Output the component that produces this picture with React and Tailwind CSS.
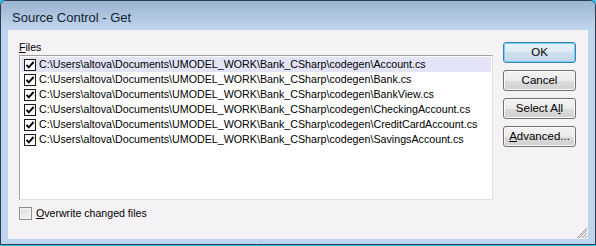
const BASE = 'C:\\Users\\altova\\Documents\\UMODEL_WORK\\Bank_CSharp\\codegen\\'
const FILES = ['Account.cs', 'Bank.cs', 'BankView.cs', 'CheckingAccount.cs', 'CreditCardAccount.cs', 'SavingsAccount.cs']

function Check() {
  return (
    <span className="w-[12px] h-[12px] border border-[#1c1c1c] bg-white flex items-center justify-center flex-shrink-0">
      <svg width="10" height="10" viewBox="0 0 10 10">
        <path d="M1.5 4.8 L3.8 7.3 L8.6 2" stroke="#000" strokeWidth="1.9" fill="none" />
      </svg>
    </span>
  )
}

function Button({ children, primary }) {
  return (
    <button
      className={`w-[73px] h-[21px] rounded-[3px] border text-[11.5px] text-black leading-none flex items-center justify-center ${
        primary
          ? 'border-[#3c7fb1] shadow-[inset_0_0_0_1px_#6ed3f6] bg-[linear-gradient(#e9f2f9_0%,#dde9f3_50%,#cfdfed_50%,#c3d7e9_100%)]'
          : 'border-[#707070] shadow-[inset_0_0_0_1px_#fbfbfb] bg-[linear-gradient(#f2f2f2_0%,#ebebeb_50%,#dddddd_50%,#cfcfcf_100%)]'
      }`}
    >
      {children}
    </button>
  )
}

export default function App() {
  return (
    <div className="w-[596px] h-[246px] bg-[#2bc6ee] font-['Liberation_Sans',Arial,sans-serif]">
      <div className="w-[596px] h-[245px] flex flex-col border border-[#2e3b4a] rounded-t-[6px] bg-[#bcd4ef] overflow-hidden">
        {/* Title bar */}
        <div className="h-[29px] flex items-center pl-[11px] bg-[linear-gradient(#9bb4d2,#c2d6ee)]">
          <span className="text-[13px] text-[#141e2a] pt-[5px]">Source Control - Get</span>
        </div>

        {/* Client */}
        <div className="flex-1 px-[7px] pb-[5px] flex">
          <div className="flex-1 bg-[#f5f2f6] flex pl-[11px] pt-[10px] relative">
            <div className="w-[474px] flex flex-col">
              <p className="text-[10.6px] text-black leading-none h-[15px] pt-[2px]">
                <span className="underline underline-offset-[1px]">F</span>iles
              </p>
              <div className="h-[145px] overflow-hidden border border-t-[#a0a0a0] border-l-[#a0a0a0] border-r-[#e3e0e5] border-b-[#e3e0e5] bg-white pt-[1px] px-[1px]">
                {FILES.map((f, i) => (
                  <div
                    key={f}
                    className={`h-[15px] flex items-center pl-[3px] gap-[3px] ${i === 0 ? 'bg-[#e3e4f8]' : ''}`}
                  >
                    <Check />
                    <span className="text-[10.7px] text-black leading-none whitespace-nowrap">{BASE + f}</span>
                  </div>
                ))}
              </div>
              <div className="flex items-center gap-[4px] mt-[6px]">
                <span className="w-[13px] h-[13px] border border-[#8e8f8f] bg-[linear-gradient(135deg,#dcdcdc,#f6f6f6)] shadow-[inset_0_0_0_1px_#f4f4f4]" />
                <span className="text-[10.6px] text-black">
                  <span className="underline underline-offset-[1px]">O</span>verwrite changed files
                </span>
              </div>
            </div>

            <div className="ml-[10px] pt-[2px] flex flex-col gap-[7px]">
              <Button primary>OK</Button>
              <Button>Cancel</Button>
              <Button>
                Select A<span className="underline underline-offset-[1px]">l</span>l
              </Button>
              <Button>
                <span className="underline underline-offset-[1px]">A</span>dvanced...
              </Button>
            </div>

            {/* size grip */}
            <svg className="absolute right-0 bottom-0" width="12" height="12" viewBox="0 0 12 12">
              <path d="M11 3 L3 11 M11 6 L6 11 M11 9 L9 11 M11 1 L1 11" stroke="#9a9a9a" strokeWidth="1" />
            </svg>
          </div>
        </div>
      </div>
    </div>
  )
}
